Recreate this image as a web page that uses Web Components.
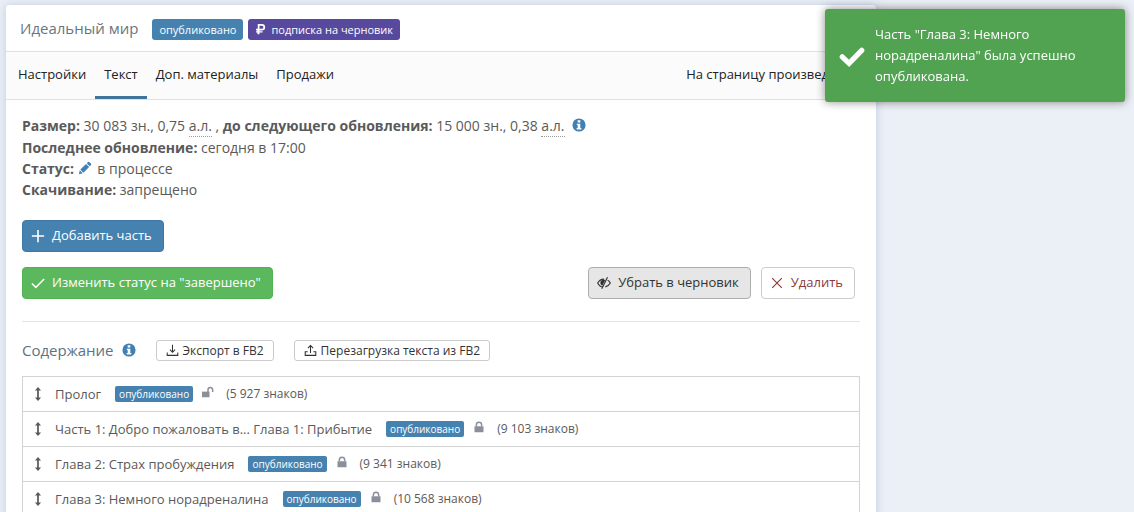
<!DOCTYPE html>
<html lang="ru">
<head>
<meta charset="utf-8">
<meta name="viewport" content="width=device-width, initial-scale=1">
<title>Идеальный мир</title>
<style>
  * { box-sizing: border-box; }

  body {
    margin: 0;
    min-height: 100vh;
    background: #ebf0f6;
    color: #5a5a5a;
    font-family: "Open Sans", "Noto Sans", sans-serif;
    font-size: 13px;
    line-height: 21px;
  }

  .layout {
    display: grid;
    grid-template-columns: minmax(0, 1fr) 250px;
    gap: 8px;
    padding: 5px 0 0 6px;
  }

  @media only screen and (max-width: 800px) {
    .layout {
      grid-template-columns: minmax(0, 1fr);
      padding-right: 6px;
    }
  }
</style>
</head>
<body>
<div class="layout">
  <work-panel>
    <work-header slot="header" name="Идеальный мир">
      <status-badge>опубликовано</status-badge>
      <status-badge kind="draft"><app-icon name="ruble"></app-icon>подписка на черновик</status-badge>
    </work-header>
    <work-tabs slot="tabs"></work-tabs>
    <work-info></work-info>
    <work-actions></work-actions>
    <contents-bar></contents-bar>
    <chapter-list>
      <chapter-row count="5 927" lock="unlock">Пролог</chapter-row>
      <chapter-row count="9 103" lock="lock">Часть 1: Добро пожаловать в... Глава 1: Прибытие</chapter-row>
      <chapter-row count="9 341" lock="lock">Глава 2: Страх пробуждения</chapter-row>
      <chapter-row count="10 568" lock="lock">Глава 3: Немного норадреналина</chapter-row>
    </chapter-list>
  </work-panel>
</div>
<toast-message>Часть "Глава 3: Немного норадреналина" была успешно опубликована.</toast-message>

<script>
const icons = {
  ruble: '<path fill="currentColor" fill-rule="evenodd" d="M4 0h6a4.500 4.500 0 0 1 0 9.500H6.500v1H11v2H6.500V15h-3v-2.500h-2v-2h2v-1h-2v-2.500H4zM6.500 2.500V7H10a2 2 0 0 0 0-4.500z"/>',
  plus: '<path d="M8 1v14M1 8h14" stroke-width="1.800"/>',
  check: '<path d="M1 8.500l4.500 4.500L15 3.500" stroke-width="1.800"/>',
  checkBold: '<path d="M2 8.500l4.200 4L14 4.500" stroke-width="3.200" stroke-linecap="round"/>',
  cross: '<path d="M2.500 2.500l11 11M13.500 2.500l-11 11" stroke-width="1.300"/>',
  info: '<circle cx="8" cy="8" r="7.500" fill="currentColor" stroke="none"/><path fill="#fff" stroke="none" d="M6.500 2.500h3v2.500h-3zM5.500 6.500h4v5h1.200V13H5.300v-1.500h1.200V8h-1z"/>',
  pencil: '<path fill="currentColor" stroke="none" d="M1 15l1-4.500L5.500 14zM2.700 9.800l6.500-6.500L12.700 6.800 6.200 13.300zM10 2.500l1.200-1.200a1.500 1.500 0 0 1 2 0l1.500 1.500a1.500 1.500 0 0 1 0 2L13.500 6z"/>',
  eye: '<path d="M7 12.500C4 12.500 2 10.500.8 8 2.300 5.200 5 3.500 8 3.500M9.500 12.400c2.500-.5 4.500-2.100 5.700-4.400-.7-1.400-1.700-2.500-3-3.300M12 1.500L5.500 14.500" stroke-width="1.300"/><path fill="currentColor" stroke="none" d="M9.500 4.500L6 11.200A3.600 3.600 0 0 1 9.500 4.500z"/>',
  download: '<path d="M8 1v9M4.800 7L8 10.200 11.200 7M1.500 10.500V14h13v-3.500" stroke-width="1.300"/>',
  upload: '<path d="M8 11V2M4.800 5L8 1.800 11.200 5M4.500 9.500h-3V14h13V9.500h-3" stroke-width="1.300"/>',
  move: '<path d="M8 3v10" stroke-width="2"/><path fill="currentColor" stroke="none" d="M8 0l3.500 4h-7zM8 16l3.500-4h-7z"/>',
  lock: '<path fill="currentColor" stroke="none" d="M2 7h12v8H2z"/><path d="M4.500 7V5a3.500 3.500 0 0 1 7 0v2" stroke-width="2"/>',
  unlock: '<path fill="currentColor" stroke="none" d="M0 7.500h10V15H0z"/><path d="M8 8V5a3 3 0 0 1 6.200 0v3" stroke-width="2"/>'
};

class AppIcon extends HTMLElement {
  constructor() {
    super();
    this.attachShadow({ mode: 'open' });
  }

  connectedCallback() {
    this.shadowRoot.innerHTML = `
      <style>
        :host { display: inline-flex; flex: none; width: var(--icon-size, 14px); height: var(--icon-size, 14px); }
        svg { width: 100%; height: 100%; fill: none; stroke: currentColor; }
        [data-icon="ruble"] { stroke: none; }
      </style>
      <svg viewBox="0 0 16 16" aria-hidden="true" data-icon="${this.getAttribute('name')}">${icons[this.getAttribute('name')]}</svg>
    `;
  }
}
customElements.define('app-icon', AppIcon);

const badgeTemplate = document.createElement('template');
badgeTemplate.innerHTML = `
<style>
  :host {
    display: inline-flex;
    align-items: center;
    gap: 5px;
    box-sizing: border-box;
    height: 21px;
    padding: 0 7px;
    border-radius: 3px;
    background: #4682b0;
    color: #fff;
    font-size: 11px;
    line-height: 21px;
    white-space: nowrap;
    --icon-size: 11px;
  }
  :host([kind="draft"]) { background: #574a9e; }
  :host([small]) {
    height: 16px;
    padding: 0 4px;
    border-radius: 2px;
    font-size: 10px;
    line-height: 16px;
  }
</style>
<slot></slot>
`;

class StatusBadge extends HTMLElement {
  constructor() {
    super();
    this.attachShadow({ mode: 'open' });
    this.shadowRoot.appendChild(badgeTemplate.content.cloneNode(true));
  }
}
customElements.define('status-badge', StatusBadge);

class AppButton extends HTMLElement {
  constructor() {
    super();
    this.attachShadow({ mode: 'open' });
  }

  connectedCallback() {
    this.shadowRoot.innerHTML = `
      <style>
        :host { display: inline-flex; --icon-size: 14px; }
        button {
          display: inline-flex;
          align-items: center;
          gap: 7px;
          box-sizing: border-box;
          height: 32px;
          margin: 0;
          padding: 0 11px 1px 8px;
          border: 1px solid #ccc;
          border-radius: 4px;
          background: #fff;
          color: #333;
          font: inherit;
          white-space: nowrap;
          cursor: pointer;
        }
        :host([kind="primary"]) button { background: #4682b0; border-color: #3f77a3; color: #fff; }
        :host([kind="success"]) button { background: #5cb85c; border-color: #52b152; color: #fff; }
        :host([kind="active"]) button { background: #e6e6e6; border-color: #adadad; }
        :host([kind="danger"]) button { color: #8b3a36; }
        :host([small]) { --icon-size: 13px; font-size: 12px; }
        :host([small]) button { height: 21px; gap: 4px; padding: 0 9px; border-radius: 3px; }
      </style>
      <button type="button"><app-icon name="${this.getAttribute('icon')}"></app-icon><slot></slot></button>
    `;
  }
}
customElements.define('app-button', AppButton);

const panelTemplate = document.createElement('template');
panelTemplate.innerHTML = `
<style>
  :host {
    display: block;
    background: #fff;
    border-radius: 3px;
    box-shadow: 0 0 8px rgba(150, 170, 210, .5);
  }
  main { padding: 15px 16px 24px; }
</style>
<slot name="header"></slot>
<slot name="tabs"></slot>
<main><slot></slot></main>
`;

class WorkPanel extends HTMLElement {
  constructor() {
    super();
    this.attachShadow({ mode: 'open' });
    this.shadowRoot.appendChild(panelTemplate.content.cloneNode(true));
  }
}
customElements.define('work-panel', WorkPanel);

class WorkHeader extends HTMLElement {
  constructor() {
    super();
    this.attachShadow({ mode: 'open' });
  }

  connectedCallback() {
    this.shadowRoot.innerHTML = `
      <style>
        :host {
          display: flex;
          align-items: center;
          gap: 5px;
          padding: 12px 14px 10px;
        }
        h1 { margin: 0 9px 2px 0; color: #6c757d; font-size: 15px; font-weight: 400; line-height: 22px; }
      </style>
      <h1>${this.getAttribute('name')}</h1>
      <slot></slot>
    `;
  }
}
customElements.define('work-header', WorkHeader);

const tabsTemplate = document.createElement('template');
tabsTemplate.innerHTML = `
<style>
  :host { display: block; }
  nav {
    display: flex;
    padding: 0 7px 0 3px;
    border: solid #dfe2e5;
    border-width: 1px 0;
    background: #fbfbfb;
  }
  a {
    padding: 12px 9px 11px;
    border-bottom: 3px solid transparent;
    color: #222;
    text-decoration: none;
    white-space: nowrap;
  }
  a.active { border-color: #41749b; }
  a.page { margin-left: auto; }
</style>
<nav>
  <a href="#settings">Настройки</a>
  <a href="#text" class="active">Текст</a>
  <a href="#extra">Доп. материалы</a>
  <a href="#sales">Продажи</a>
  <a href="#page" class="page">На страницу произведения</a>
</nav>
`;

class WorkTabs extends HTMLElement {
  constructor() {
    super();
    this.attachShadow({ mode: 'open' });
    this.shadowRoot.appendChild(tabsTemplate.content.cloneNode(true));
  }
}
customElements.define('work-tabs', WorkTabs);

const infoTemplate = document.createElement('template');
infoTemplate.innerHTML = `
<style>
  :host { display: block; font-size: 14px; --icon-size: 14px; }
  b { font-weight: 700; }
  abbr { display: inline-block; border-bottom: 1px dotted #999; text-decoration: none; }
  app-icon { margin-right: 2px; color: #4080b5; vertical-align: -1px; }
  .info { margin-left: 4px; }
</style>
<div><b>Размер:</b> 30 083 зн., 0,75 <abbr title="авторский лист">а.л.</abbr> , <b>до следующего обновления:</b> 15 000 зн., 0,38 <abbr title="авторский лист">а.л.</abbr> <app-icon class="info" name="info"></app-icon></div>
<div><b>Последнее обновление:</b> сегодня в 17:00</div>
<div><b>Статус:</b> <app-icon name="pencil"></app-icon> в процессе</div>
<div><b>Скачивание:</b> запрещено</div>
`;

class WorkInfo extends HTMLElement {
  constructor() {
    super();
    this.attachShadow({ mode: 'open' });
    this.shadowRoot.appendChild(infoTemplate.content.cloneNode(true));
  }
}
customElements.define('work-info', WorkInfo);

const actionsTemplate = document.createElement('template');
actionsTemplate.innerHTML = `
<style>
  :host {
    display: flex;
    flex-direction: column;
    gap: 15px;
    margin-top: 20px;
    padding-bottom: 22px;
    border-bottom: 1px solid #e4e4e4;
  }
  .row { display: flex; flex-wrap: wrap; gap: 10px; padding-right: 5px; }
  .push { margin-left: auto; }
</style>
<div class="row"><app-button kind="primary" icon="plus">Добавить часть</app-button></div>
<div class="row">
  <app-button kind="success" icon="check">Изменить статус на "завершено"</app-button>
  <app-button class="push" kind="active" icon="eye">Убрать в черновик</app-button>
  <app-button kind="danger" icon="cross">Удалить</app-button>
</div>
`;

class WorkActions extends HTMLElement {
  constructor() {
    super();
    this.attachShadow({ mode: 'open' });
    this.shadowRoot.appendChild(actionsTemplate.content.cloneNode(true));
  }
}
customElements.define('work-actions', WorkActions);

const contentsTemplate = document.createElement('template');
contentsTemplate.innerHTML = `
<style>
  :host { display: flex; align-items: center; gap: 20px; padding: 16px 0 14px; }
  h2 {
    display: flex;
    align-items: center;
    gap: 8px;
    margin: 0;
    color: #5d7285;
    font-size: 15px;
    font-weight: 400;
    line-height: 24px;
    --icon-size: 14px;
  }
  app-icon { color: #4080b5; }
</style>
<h2>Содержание <app-icon name="info"></app-icon></h2>
<app-button small icon="download">Экспорт в FB2</app-button>
<app-button small icon="upload">Перезагрузка текста из FB2</app-button>
`;

class ContentsBar extends HTMLElement {
  constructor() {
    super();
    this.attachShadow({ mode: 'open' });
    this.shadowRoot.appendChild(contentsTemplate.content.cloneNode(true));
  }
}
customElements.define('contents-bar', ContentsBar);

const listTemplate = document.createElement('template');
listTemplate.innerHTML = `
<style>
  :host { display: block; border: 1px solid #d3d3d3; border-bottom: 0; }
</style>
<div role="list"><slot></slot></div>
`;

class ChapterList extends HTMLElement {
  constructor() {
    super();
    this.attachShadow({ mode: 'open' });
    this.shadowRoot.appendChild(listTemplate.content.cloneNode(true));
  }
}
customElements.define('chapter-list', ChapterList);

class ChapterRow extends HTMLElement {
  constructor() {
    super();
    this.attachShadow({ mode: 'open' });
  }

  connectedCallback() {
    this.setAttribute('role', 'listitem');
    this.shadowRoot.innerHTML = `
      <style>
        :host {
          display: flex;
          align-items: center;
          padding: 6px 8px 7px;
          border-bottom: 1px solid #d3d3d3;
        }
        .handle { --icon-size: 14px; margin-right: 10px; }
        .name { padding-top: 2px; line-height: 19px; }
        status-badge { margin: 0 9px 0 14px; }
        .lock { --icon-size: 12px; margin: 0 12px 4px 0; color: #8b8f9a; }
        .count { font-size: 12px; }
      </style>
      <app-icon class="handle" name="move"></app-icon>
      <span class="name"><slot></slot></span>
      <status-badge small>опубликовано</status-badge>
      <app-icon class="lock" name="${this.getAttribute('lock')}"></app-icon>
      <span class="count">(${this.getAttribute('count')} знаков)</span>
    `;
  }
}
customElements.define('chapter-row', ChapterRow);

const toastTemplate = document.createElement('template');
toastTemplate.innerHTML = `
<style>
  :host {
    position: fixed;
    top: 9px;
    right: 9px;
    display: flex;
    align-items: center;
    gap: 10px;
    box-sizing: border-box;
    width: 300px;
    padding: 15px 35px 15px 14px;
    border-radius: 3px;
    background: #51a351;
    box-shadow: 0 0 10px rgba(0, 0, 0, .45);
    color: #fff;
    --icon-size: 26px;
  }
</style>
<app-icon name="checkBold"></app-icon>
<div role="status"><slot></slot></div>
`;

class ToastMessage extends HTMLElement {
  constructor() {
    super();
    this.attachShadow({ mode: 'open' });
    this.shadowRoot.appendChild(toastTemplate.content.cloneNode(true));
  }
}
customElements.define('toast-message', ToastMessage);
</script>
</body>
</html>
